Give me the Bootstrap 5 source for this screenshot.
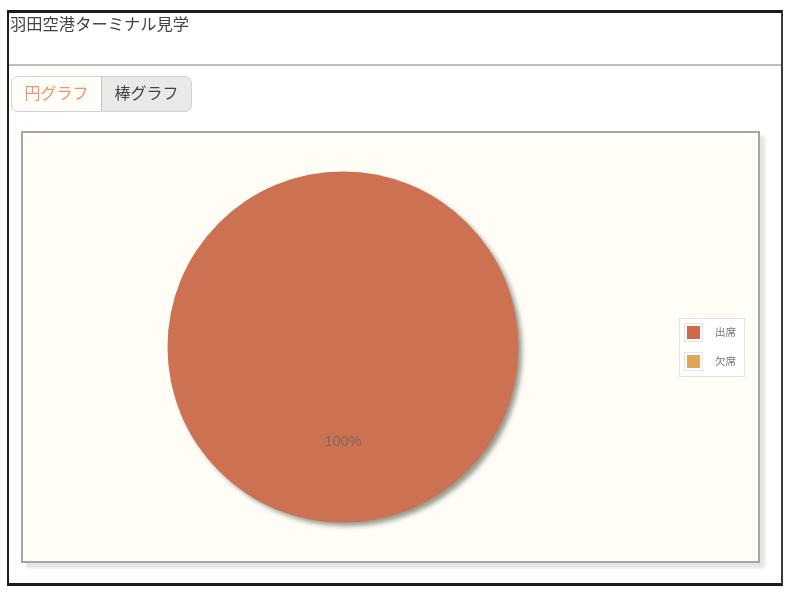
<!doctype html>
<html lang="ja">
<head>
<meta charset="utf-8">
<title>羽田空港ターミナル見学</title>
<link href="https://cdn.jsdelivr.net/npm/bootstrap@5.3.0/dist/css/bootstrap.min.css" rel="stylesheet">
<style>
html,body{height:100%;background:#fff;overflow:hidden}
body{padding:10px 12px 9px 7px;font-family:"Liberation Sans","Noto Sans CJK JP",sans-serif;color:#333}
.shot-frame{height:576px;border:solid #1c1c1c;border-width:3px 2px 3px 2px;border-right-color:#3a3a3a;background:#fff}
.shot-title{height:53px;margin:0;padding:1px 0 0 1px;font-size:16.3px;line-height:20px;color:#444;border-bottom:2px solid #bdbdbd;filter:blur(.5px)}
.shot-tabs{margin:10px 0 0 2px;height:36px;filter:blur(.5px)}
.shot-tab{width:91px;font-size:16px;line-height:32px;padding:0;border:1px solid #d3d3d3;color:#444;background:#e9e9e9;border-radius:0}
.shot-tab:first-child{background:#fffdf8;color:#eb9470;border-radius:7px 0 0 7px}
.shot-tab:last-child{border-radius:0 7px 7px 0;border-left-color:#c4c4c4}
.shot-plot{margin:19px 0 0 12px;width:739px;height:432px;border:2px solid #a6a6a6;background:#fffdf6;box-shadow:5px 5px 3px #e4e4e2;filter:blur(.4px)}
.shot-pie{position:absolute;left:144px;top:38px;overflow:visible}
.shot-pct{font-size:14.5px;fill:#7e6a60;font-family:"Liberation Sans",sans-serif}
.shot-legend{position:absolute;left:656px;top:185px;width:66px;height:59px;background:#fff;border:1px solid #e2e2e2;padding:4px 5px 0 4px;font-size:10.5px;color:#777;line-height:18px;filter:blur(.4px)}
.shot-key{height:29px}
.shot-swatch{width:19px;height:19px;border:1px solid #e4e4e4;padding:2px;background:#fff}
.shot-swatch span{display:block;width:100%;height:100%}
.shot-c1{background:#d0694b}
.shot-c2{background:#dda75a}
</style>
</head>
<body>
<div class="shot-frame">
  <h1 class="shot-title fw-normal">羽田空港ターミナル見学</h1>
  <div class="shot-tabs btn-group" role="group">
    <button type="button" class="btn shot-tab">円グラフ</button>
    <button type="button" class="btn shot-tab">棒グラフ</button>
  </div>
  <div class="shot-plot position-relative">
    <svg class="shot-pie" width="352" height="352" viewBox="0 0 352 352" role="img" aria-label="円グラフ">
      <defs><filter id="soft" x="-10%" y="-10%" width="120%" height="120%"><feGaussianBlur stdDeviation="2.4"/></filter></defs>
      <circle cx="180" cy="180" r="175" fill="#85857a" opacity=".85" filter="url(#soft)"/>
      <circle cx="176" cy="176" r="175.5" fill="#cc7151"/>
      <text class="shot-pct" x="176" y="275" text-anchor="middle">100%</text>
    </svg>
    <div class="shot-legend">
      <div class="shot-key d-flex align-items-start gap-2"><div class="shot-swatch"><span class="shot-c1"></span></div><span class="ms-1">出席</span></div>
      <div class="shot-key d-flex align-items-start gap-2"><div class="shot-swatch"><span class="shot-c2"></span></div><span class="ms-1">欠席</span></div>
    </div>
  </div>
</div>
<script src="https://cdn.jsdelivr.net/npm/bootstrap@5.3.0/dist/js/bootstrap.bundle.min.js"></script>
</body>
</html>
